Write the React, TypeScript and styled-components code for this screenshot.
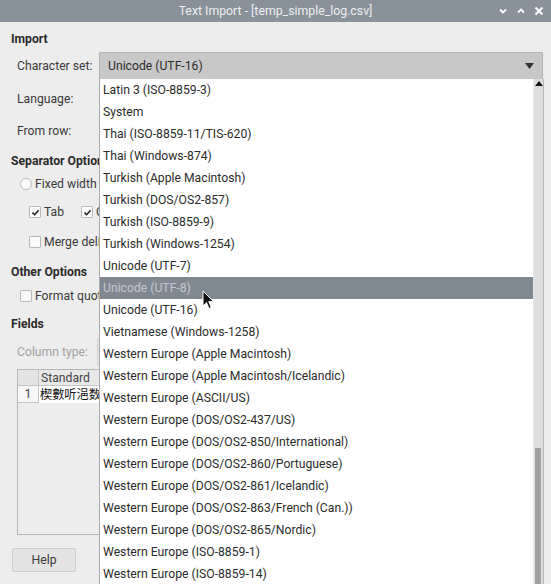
import React from "react";
import styled, { createGlobalStyle } from "styled-components";

const Global = createGlobalStyle`
  html, body { margin: 0; padding: 0; }
  body { width: 551px; height: 584px; overflow: hidden; background: #ededed; font-family: Roboto, "Noto Sans", sans-serif; }
`;

const Window = styled.div`
  position: relative;
  width: 551px;
  height: 584px;
  background: #ededed;
  overflow: hidden;
  display: flex;
  flex-direction: column;
`;

const TitleBar = styled.div`
  height: 22px;
  flex: 0 0 22px;
  background: #89929b;
  position: relative;
  display: flex;
  align-items: center;
  justify-content: center;
  color: #eceef0;
  font-size: 12.3px;
  font-weight: 400;
`;

const TitleButtons = styled.div`
  position: absolute;
  right: 7px;
  top: 0;
  height: 22px;
  display: flex;
  align-items: center;
  gap: 8px;
`;

const Body = styled.div`
  flex: 1;
  padding: 9px 0 0 11px;
  display: flex;
  flex-direction: column;
  color: #363636;
  font-size: 12.2px;
`;

const Row = styled.div<{ $h: number; $mt?: number; $indent?: number; $clip?: boolean }>`
  height: ${(p) => p.$h}px;
  margin-top: ${(p) => p.$mt ?? 0}px;
  padding-left: ${(p) => p.$indent ?? 0}px;
  display: flex;
  align-items: center;
  white-space: nowrap;
  box-sizing: border-box;
  ${(p) => (p.$clip ? "width: 88px; overflow: hidden;" : "")}
`;

const SectionTitle = styled.span`
  font-weight: 700;
  font-size: 12.2px;
  color: #2a2a2a;
`;

const Label = styled.span<{ $w?: number; $disabled?: boolean }>`
  box-sizing: border-box;
  width: ${(p) => p.$w ?? 88}px;
  flex: 0 0 ${(p) => p.$w ?? 88}px;
  padding-left: 6px;
  color: ${(p) => (p.$disabled ? "#a3a3a3" : "#3a3a3a")};
`;

const Combo = styled.div<{ $disabled?: boolean }>`
  width: 444px;
  flex: 0 0 444px;
  height: 28px;
  border: 1px solid ${(p) => (p.$disabled ? "#d2d2d2" : "#b3b3b3")};
  background: ${(p) => (p.$disabled ? "#e6e6e6" : "#c8c8c8")};
  display: flex;
  align-items: center;
  justify-content: space-between;
  padding: 0 8px 0 8px;
  box-sizing: border-box;
  color: #2e2e2e;
  border-radius: 1px;
`;

const Check = styled.span<{ $round?: boolean }>`
  width: 10px;
  height: 10px;
  border: 1px solid #b9b9b9;
  background: #fafafa;
  border-radius: ${(p) => (p.$round ? "50%" : "1px")};
  margin-right: 3px;
  display: inline-flex;
  align-items: center;
  justify-content: center;
  flex: 0 0 auto;
`;

const OptionText = styled.span<{ $gap?: number }>`
  margin-right: ${(p) => p.$gap ?? 9}px;
  color: #3a3a3a;
`;

const Table = styled.div`
  margin-top: 3px;
  margin-left: 6px;
  width: 90px;
  height: 166px;
  border: 1px solid #b7b7b7;
  box-sizing: border-box;
  background: #ededed;
  display: grid;
  grid-template-columns: 21px 1fr;
  grid-template-rows: 16px 17px 1fr;
  overflow: hidden;
`;

const Corner = styled.div`
  background: #e4e4e4;
  border-right: 1px solid #c4c4c4;
  border-bottom: 1px solid #c4c4c4;
`;

const HeaderCell = styled.div`
  background: #e8e8e8;
  border-bottom: 1px solid #c4c4c4;
  padding-left: 2px;
  line-height: 16px;
  color: #444;
  white-space: nowrap;
  overflow: hidden;
`;

const RowNum = styled.div`
  background: #f7f7f7;
  border-right: 1px solid #c4c4c4;
  border-bottom: 1px solid #c4c4c4;
  text-align: center;
  line-height: 17px;
  color: #444;
`;

const DataCell = styled.div`
  background: #ffffff;
  padding-left: 1px;
  line-height: 16px;
  color: #111;
  white-space: nowrap;
  overflow: hidden;
  font-family: "Noto Sans CJK SC", "Noto Sans CJK TC", sans-serif;
`;

const Filler = styled.div`
  grid-column: 1 / 3;
`;

const HelpButton = styled.div`
  margin-top: 13px;
  margin-left: 1px;
  width: 64px;
  height: 24px;
  box-sizing: border-box;
  border: 1px solid #cdcdcd;
  background: #e4e4e4;
  border-radius: 2px;
  display: flex;
  align-items: center;
  justify-content: center;
  color: #3a3a3a;
`;

const Dropdown = styled.div`
  position: absolute;
  left: 99px;
  top: 79px;
  width: 445px;
  height: 510px;
  background: #ffffff;
  border-left: 1px solid #a9a9a9;
  border-right: 1px solid #b9b9b9;
  box-sizing: border-box;
  display: flex;
`;

const List = styled.div`
  flex: 1;
  display: flex;
  flex-direction: column;
`;

const Item = styled.div<{ $active?: boolean }>`
  height: 22px;
  flex: 0 0 22px;
  line-height: 22px;
  padding-left: 3px;
  font-size: 12.2px;
  color: ${(p) => (p.$active ? "#c3c8cd" : "#2c2c2c")};
  background: ${(p) => (p.$active ? "#808992" : "transparent")};
  white-space: nowrap;
`;

const Scrollbar = styled.div`
  width: 9px;
  flex: 0 0 9px;
  background: #dedede;
  border-left: 1px solid #e9e9e9;
  position: relative;
  display: flex;
  flex-direction: column;
  align-items: center;
`;

const ScrollArrow = styled.div`
  margin-top: 2px;
  width: 0;
  height: 0;
  border-left: 4px solid transparent;
  border-right: 4px solid transparent;
  border-bottom: 5px solid #111;
`;

const Thumb = styled.div`
  position: absolute;
  left: 1px;
  top: 369px;
  width: 6px;
  bottom: 0;
  background: #a1a1a1;
`;

const Cursor = styled.svg`
  position: absolute;
  left: 202px;
  top: 290px;
`;

const items = [
  "Latin 3 (ISO-8859-3)",
  "System",
  "Thai (ISO-8859-11/TIS-620)",
  "Thai (Windows-874)",
  "Turkish (Apple Macintosh)",
  "Turkish (DOS/OS2-857)",
  "Turkish (ISO-8859-9)",
  "Turkish (Windows-1254)",
  "Unicode (UTF-7)",
  "Unicode (UTF-8)",
  "Unicode (UTF-16)",
  "Vietnamese (Windows-1258)",
  "Western Europe (Apple Macintosh)",
  "Western Europe (Apple Macintosh/Icelandic)",
  "Western Europe (ASCII/US)",
  "Western Europe (DOS/OS2-437/US)",
  "Western Europe (DOS/OS2-850/International)",
  "Western Europe (DOS/OS2-860/Portuguese)",
  "Western Europe (DOS/OS2-861/Icelandic)",
  "Western Europe (DOS/OS2-863/French (Can.))",
  "Western Europe (DOS/OS2-865/Nordic)",
  "Western Europe (ISO-8859-1)",
  "Western Europe (ISO-8859-14)",
];

const Tick = () => (
  <svg width="9" height="9" viewBox="0 0 9 9">
    <path d="M1.5 4.6 L3.6 6.7 L7.6 2.2" fill="none" stroke="#222" strokeWidth="1.6" />
  </svg>
);

export default function App() {
  return (
    <>
      <Global />
      <Window>
        <TitleBar>
          Text Import - [temp_simple_log.csv]
          <TitleButtons>
            <svg width="10" height="10" viewBox="0 0 10 10">
              <path d="M2 3.5 L5 6.5 L8 3.5" fill="none" stroke="#fff" strokeWidth="1.8" />
            </svg>
            <svg width="10" height="10" viewBox="0 0 10 10">
              <path d="M2 6.5 L5 3.5 L8 6.5" fill="none" stroke="#fff" strokeWidth="1.8" />
            </svg>
            <svg width="10" height="10" viewBox="0 0 10 10">
              <path d="M1.5 1.5 L8.5 8.5 M8.5 1.5 L1.5 8.5" fill="none" stroke="#fff" strokeWidth="2" />
            </svg>
          </TitleButtons>
        </TitleBar>
        <Body>
          <Row $h={16}>
            <SectionTitle>Import</SectionTitle>
          </Row>
          <Row $h={28} $mt={5}>
            <Label>Character set:</Label>
            <Combo>
              <span>Unicode (UTF-16)</span>
              <svg width="9" height="6" viewBox="0 0 9 6">
                <path d="M0 0 H9 L4.5 6 Z" fill="#333" />
              </svg>
            </Combo>
          </Row>
          <Row $h={28} $mt={5} $clip>
            <Label>Language:</Label>
          </Row>
          <Row $h={28} $mt={4} $clip>
            <Label>From row:</Label>
          </Row>
          <Row $h={16} $mt={8} $clip>
            <SectionTitle>Separator Options</SectionTitle>
          </Row>
          <Row $h={16} $mt={7} $indent={9} $clip>
            <Check $round />
            <OptionText>Fixed width</OptionText>
          </Row>
          <Row $h={20} $mt={10} $indent={18} $clip>
            <Check>
              <Tick />
            </Check>
            <OptionText $gap={17}>Tab</OptionText>
            <Check>
              <Tick />
            </Check>
            <OptionText>Comma</OptionText>
          </Row>
          <Row $h={20} $mt={10} $indent={18} $clip>
            <Check />
            <OptionText>Merge delimiters</OptionText>
          </Row>
          <Row $h={16} $mt={12} $clip>
            <SectionTitle>Other Options</SectionTitle>
          </Row>
          <Row $h={20} $mt={6} $indent={9} $clip>
            <Check />
            <OptionText>Format quoted field as text</OptionText>
          </Row>
          <Row $h={16} $mt={10}>
            <SectionTitle>Fields</SectionTitle>
          </Row>
          <Row $h={28} $mt={6} $clip>
            <Label $w={86} $disabled>
              Column type:
            </Label>
            <Combo $disabled />
          </Row>
          <Table>
            <Corner />
            <HeaderCell>Standard</HeaderCell>
            <RowNum>1</RowNum>
            <DataCell>楔數听浥数</DataCell>
            <Filler />
          </Table>
          <HelpButton>Help</HelpButton>
        </Body>
        <Dropdown>
          <List>
            {items.map((t) => (
              <Item key={t} $active={t === "Unicode (UTF-8)"}>
                {t}
              </Item>
            ))}
          </List>
          <Scrollbar>
            <ScrollArrow />
            <Thumb />
          </Scrollbar>
        </Dropdown>
        <Cursor width="13" height="20" viewBox="0 0 13 20">
          <path d="M1 1 L1 16 L4.5 12.5 L7 18.5 L9.3 17.5 L6.8 11.6 L11.5 11.6 Z" fill="#111" stroke="#fff" strokeWidth="1" />
        </Cursor>
      </Window>
    </>
  );
}
